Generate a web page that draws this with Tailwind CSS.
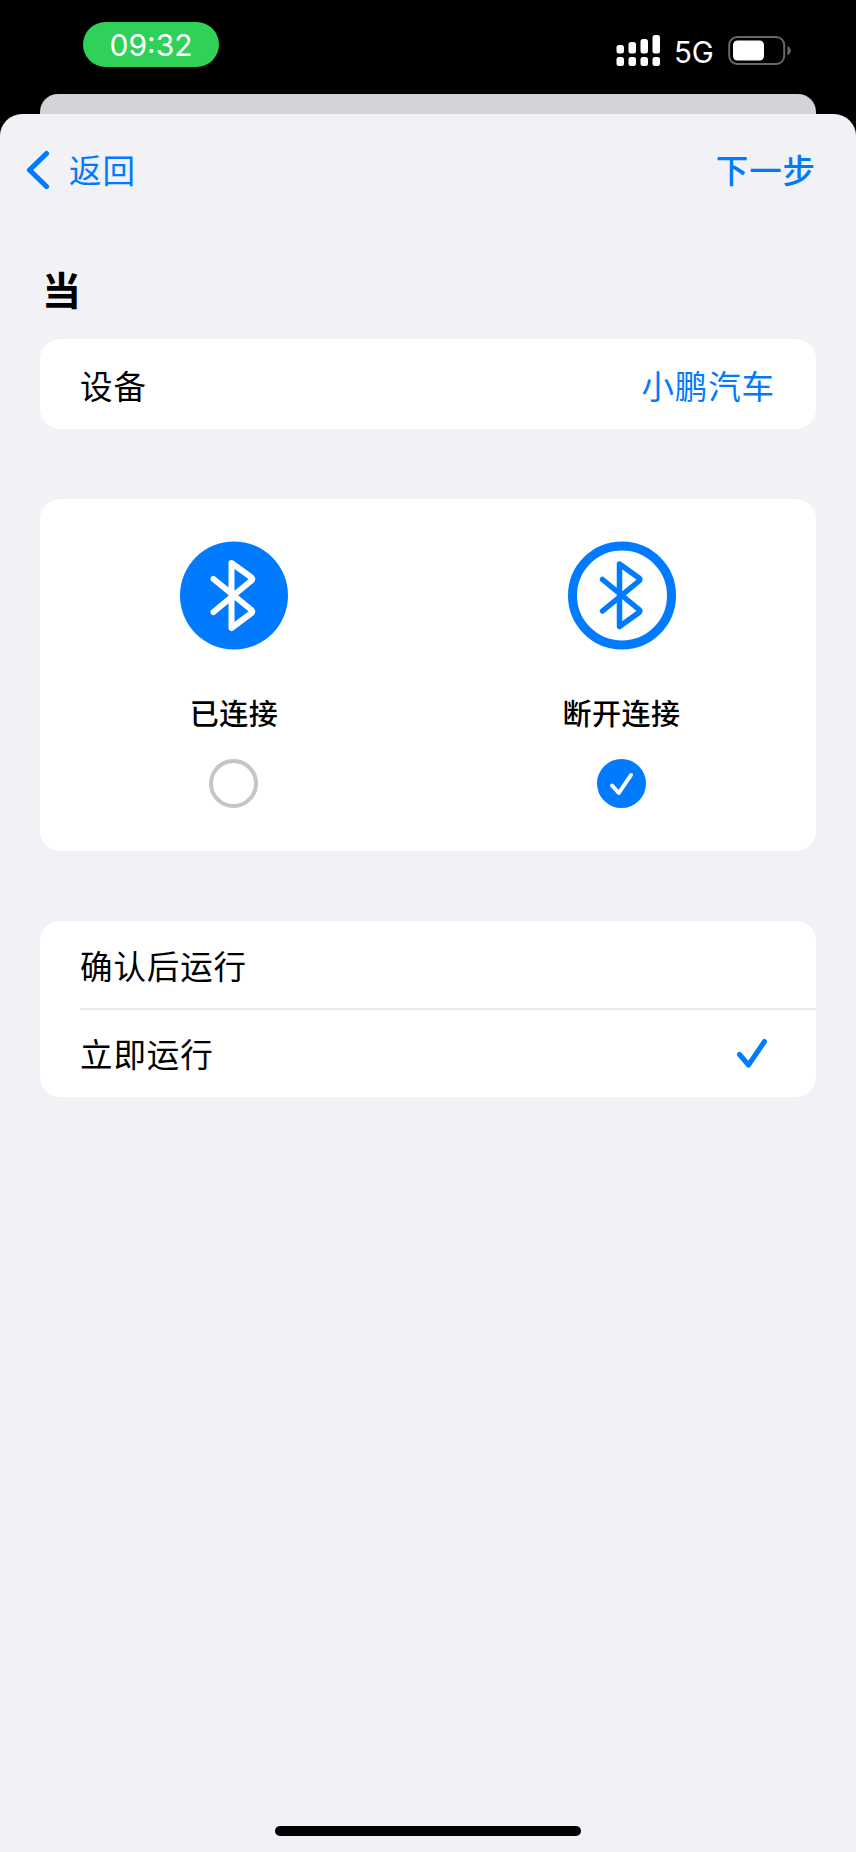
<!DOCTYPE html>
<html lang="zh-CN">
<head>
<meta charset="utf-8">
<title>自动化</title>
<script src="https://cdn.jsdelivr.net/npm/@tailwindcss/browser@4"></script>
</head>
<body class="bg-black">
<div class="flex h-[1852px] w-[856px] flex-col overflow-hidden bg-black font-['Inter','Noto_Sans_CJK_SC',sans-serif] text-[32.5px] leading-[48px] tracking-[0.9px] text-black">
  <!-- Status bar -->
  <header class="flex h-[94px] shrink-0 items-start justify-between pr-[65px] pl-[83px]">
    <div class="mt-[22px] flex h-[45px] w-[136px] items-center justify-center rounded-full bg-[#30d158] text-[30px] tracking-[0px] text-white">09:32</div>
    <div class="mt-[35px] flex h-[32px] items-start">
      <svg class="h-[32px] w-[44px]" viewBox="0 0 44 32" fill="#fff">
        <rect x="0.5" y="10" width="7.5" height="8.5" rx="2.5"/><rect x="12.5" y="7" width="7.5" height="11.5" rx="2.5"/><rect x="24.5" y="4" width="7.5" height="14.5" rx="2.5"/><rect x="36.5" y="0" width="7.5" height="18.5" rx="2.5"/>
        <rect x="0.5" y="22" width="7.5" height="9" rx="2.5"/><rect x="12.5" y="22" width="7.5" height="9" rx="2.5"/><rect x="24.5" y="22" width="7.5" height="9" rx="2.5"/><rect x="36.5" y="22" width="7.5" height="9" rx="2.5"/>
      </svg>
      <span class="ml-[14px] w-[54px] text-[29.5px] leading-[34px] tracking-[-0.2px] text-white">5G</span>
      <svg class="h-[32px] w-[63px]" viewBox="0 0 63 32" fill="none">
        <rect x="1.2" y="2" width="55" height="27" rx="8" stroke="#68686a" stroke-width="2"/>
        <rect x="5" y="5.5" width="31" height="20" rx="4.5" fill="#fff"/>
        <path d="M59.500 11c2 1 3.300 2.700 3.300 4.700s-1.300 3.700-3.300 4.700z" fill="#68686a"/>
      </svg>
    </div>
  </header>
  <div class="mx-[40px] h-[20px] shrink-0 rounded-t-[18px] bg-[#d4d4d8]"></div>

  <!-- Sheet -->
  <main class="flex flex-1 flex-col rounded-t-[22px] bg-[#f1f1f6] px-[40px]">
    <nav class="flex h-[112px] items-start justify-between pt-[34px] text-[#007aff]">
      <div class="-ml-[14px] flex items-center">
        <svg class="mb-[6px] h-[40px] w-[24px]" viewBox="0 0 24 40" fill="none" stroke="#007aff" stroke-width="5.2" stroke-linecap="round" stroke-linejoin="round"><path d="M20.500 4.500L3.500 21l17 16.500"/></svg>
        <span class="ml-[19px]">返回</span>
      </div>
      <span class="font-medium">下一步</span>
    </nav>
    <h1 class="mt-[37px] h-[76px] pl-[2px] text-[39px] leading-[56px] font-bold">当</h1>

    <section class="flex h-[90px] items-center justify-between rounded-[20px] bg-white pt-[7px] pr-[41px] pl-[40px]">
      <span>设备</span><span class="text-[#007aff]">小鹏汽车</span>
    </section>

    <section class="mt-[70px] grid h-[352px] grid-cols-2 rounded-[20px] bg-white pt-[42px] text-[29px] leading-[40px] font-medium tracking-[0.5px]">
      <div class="flex flex-col items-center">
        <svg class="h-[109px] w-[108px]" viewBox="180 541 108 109" fill="none" stroke-linecap="round" stroke-linejoin="round">
          <circle cx="234" cy="595.5" r="54" fill="#007aff"/>
          <path d="M213.500 579L251.500 610Q253 611.500 251.500 613L231.500 628V563L251.500 577.500Q253 579 251.500 580.500L213.500 612" stroke="#fff" stroke-width="6"/>
        </svg>
        <span class="mt-[45px]">已连接</span>
        <span class="mt-[24px] mr-px size-[49px] rounded-full border-4 border-[#c5c5c7]"></span>
      </div>
      <div class="flex flex-col items-center pr-px">
        <svg class="h-[109px] w-[108px]" viewBox="567.5 541 108 109" fill="none" stroke="#007aff" stroke-linecap="round" stroke-linejoin="round">
          <circle cx="621.5" cy="595.5" r="49.500" stroke-width="9"/>
          <path d="M602 579.500L638.500 609.500Q640 611 638.500 612.500L619 626.500V564L638.500 578Q640 579.500 638.500 581L602 611" stroke-width="5.500"/>
        </svg>
        <span class="mt-[45px]">断开连接</span>
        <svg class="mt-[24px] size-[49px]" viewBox="597 759 49 49" fill="none" stroke-linecap="round" stroke-linejoin="round">
          <circle cx="621.5" cy="783.5" r="24.500" fill="#007aff"/>
          <path d="M612 785.500L618.800 793L631 775" stroke="#fff" stroke-width="4"/>
        </svg>
      </div>
    </section>

    <section class="mt-[70px] flex h-[176px] flex-col rounded-[20px] bg-white pl-[40px]">
      <div class="flex h-[89px] items-center border-b-2 border-[#e9e9eb] pt-[7px]">确认后运行</div>
      <div class="flex flex-1 items-center justify-between pr-[48px]">
        <span class="pt-[5px]">立即运行</span>
        <svg class="mb-[2px] h-[32px] w-[32px]" viewBox="736 1037 32 32" fill="none" stroke="#007aff" stroke-width="5" stroke-linecap="round" stroke-linejoin="round"><path d="M739.500 1054.500L748.500 1065L764.500 1041.500"/></svg>
      </div>
    </section>

    <div class="mt-auto mb-[16px] h-[10px] w-[306px] self-center rounded-full bg-black"></div>
  </main>
</div>
</body>
</html>
